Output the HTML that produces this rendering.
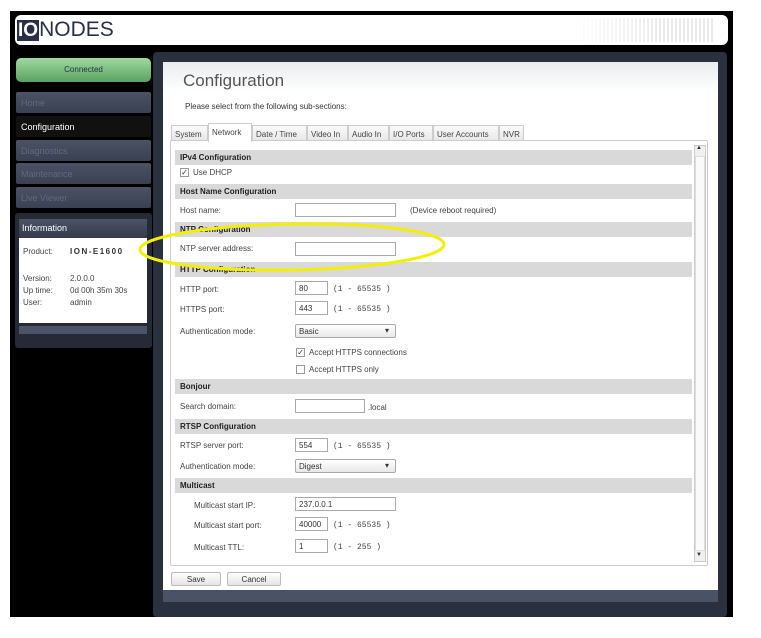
<!DOCTYPE html>
<html><head><meta charset="utf-8"><style>
*{margin:0;padding:0;box-sizing:border-box}
body{width:761px;height:638px;background:#fff;position:relative;overflow:hidden;font-family:"Liberation Sans",sans-serif;font-size:8px;color:#333}
.a{position:absolute}
.menu{position:absolute;left:16px;width:135px;height:21px;background:linear-gradient(#4a5264,#3a4152);color:#5f6a80;font-size:9px;padding:6px 0 0 5px;border-radius:2px}
.sec{position:absolute;left:175px;width:517px;height:15px;background:#d9d9d9;font-weight:bold;font-size:8px;color:#222;padding:3px 0 0 5px}
.lbl{position:absolute;font-size:8px;color:#444}
.inp{position:absolute;left:295px;height:14px;border:1px solid #aaa;background:#fff;font-size:8px;padding:2px 3px;color:#333}
.rng{position:absolute;font-size:8px;color:#444;font-family:"Liberation Mono",monospace}
.sel{position:absolute;left:295px;width:101px;height:14px;border:1px solid #aaa;border-radius:2px;background:linear-gradient(#fff,#e8e8e8);font-size:8px;padding:2px 3px}
.sel:after{content:"▾";position:absolute;right:6px;top:1px;font-size:8px}
.cb{position:absolute;width:9px;height:9px;border:1px solid #999;background:#fff;font-size:8px;line-height:7px;text-align:center}
.tab{position:absolute;top:125px;height:16px;border:1px solid #ccc;background:linear-gradient(#fafafa,#e8e8e8);font-size:8px;padding:4px 3px 0;color:#444}
.btn{position:absolute;top:572px;height:14px;border:1px solid #bbb;border-radius:2px;background:linear-gradient(#fff,#e4e4e4);font-size:8px;text-align:center;padding-top:2px}
</style></head><body>
<div class="a" style="left:10px;top:11px;width:723px;height:606px;background:#000"></div>
<div class="a" style="left:15px;top:15px;width:713px;height:30px;background:#fff;border-radius:6px"></div>
<div class="a" style="left:17px;top:20px;height:20px;font-size:21px;color:#2b2f45;line-height:20px"><span style="background:#2b2f45;color:#fff;font-weight:bold;padding:0 1px;font-size:19px">IO</span>NODES</div>
<div class="a" style="left:575px;top:18px;width:140px;height:24px;background:repeating-linear-gradient(90deg,#ddd 0 2px,#fff 2px 4px),#fff;opacity:.6;-webkit-mask:linear-gradient(90deg,transparent,#000 60%)"></div>
<div class="a" style="left:16px;top:58px;width:135px;height:24px;border-radius:5px;background:linear-gradient(#9fd9a0,#5aa35e);color:#234;font-size:8px;text-align:center;padding-top:7px">Connected</div>
<div class="menu" style="top:92px">Home</div>
<div class="menu" style="top:116px;background:#111;color:#fff">Configuration</div>
<div class="menu" style="top:140px">Diagnostics</div>
<div class="menu" style="top:163px">Maintenance</div>
<div class="menu" style="top:187px">Live Viewer</div>
<div class="a" style="left:15px;top:213px;width:137px;height:135px;background:#262a36;border-radius:3px"></div>
<div class="a" style="left:19px;top:219px;width:128px;height:19px;background:linear-gradient(#4b5366,#353b4b);color:#fff;font-size:9px;padding:4px 0 0 3px">Information</div>
<div class="a" style="left:19px;top:238px;width:128px;height:85px;background:#fff"></div>
<div class="lbl" style="left:23px;top:247px">Product:</div><div class="lbl" style="left:70px;top:247px;font-weight:bold;letter-spacing:1.5px;color:#333">ION-E1600</div>
<div class="lbl" style="left:23px;top:274px">Version:</div><div class="lbl" style="left:70px;top:274px">2.0.0.0</div>
<div class="lbl" style="left:23px;top:286px">Up time:</div><div class="lbl" style="left:70px;top:286px">0d 00h 35m 30s</div>
<div class="lbl" style="left:23px;top:298px">User:</div><div class="lbl" style="left:70px;top:298px">admin</div>
<div class="a" style="left:19px;top:326px;width:128px;height:8px;background:#4b5366"></div>
<div class="a" style="left:153px;top:52px;width:574px;height:565px;background:#2b303e;border-radius:4px"></div>
<div class="a" style="left:163px;top:62px;width:555px;height:528px;background:linear-gradient(#eaecee,#fff 30px)"></div>
<div class="a" style="left:163px;top:590px;width:555px;height:12px;background:#4a5266"></div>
<div class="a" style="left:183px;top:71px;font-size:17px;color:#555">Configuration</div>
<div class="lbl" style="left:185px;top:102px;color:#333">Please select from the following sub-sections:</div>
<div class="a" style="left:170px;top:140px;width:538px;height:426px;border:1px solid #ccc;background:#fff;border-radius:2px"></div>
<div class="tab" style="left:171px;width:37px">System</div>
<div class="tab" style="left:208px;width:44px;top:123px;height:19px;background:#fff;border-bottom:none">Network</div>
<div class="tab" style="left:252px;width:55px">Date / Time</div>
<div class="tab" style="left:307px;width:41px">Video In</div>
<div class="tab" style="left:348px;width:41px">Audio In</div>
<div class="tab" style="left:389px;width:44px">I/O Ports</div>
<div class="tab" style="left:433px;width:66px">User Accounts</div>
<div class="tab" style="left:499px;width:25px">NVR</div>
<div class="a" style="left:694px;top:145px;width:12px;height:417px;background:#f0f0f0;border:1px solid #ccc"></div>
<div class="a" style="left:695px;top:156px;width:10px;height:395px;background:#fafafa;border:1px solid #ddd"></div>
<div class="a" style="left:696px;top:145px;font-size:6px">▲</div><div class="a" style="left:696px;top:552px;font-size:6px">▼</div>

<div class="sec" style="top:150px">IPv4 Configuration</div>
<div class="cb" style="left:180px;top:168px">✓</div><div class="lbl" style="left:193px;top:168px">Use DHCP</div>
<div class="sec" style="top:184px">Host Name Configuration</div>
<div class="lbl" style="left:180px;top:206px">Host name:</div><div class="inp" style="top:203px;width:101px"></div><div class="lbl" style="left:410px;top:206px">(Device reboot required)</div>
<div class="sec" style="top:222px">NTP Configuration</div>
<div class="lbl" style="left:180px;top:244px">NTP server address:</div><div class="inp" style="top:242px;width:101px"></div>
<div class="sec" style="top:262px">HTTP Configuration</div>
<div class="lbl" style="left:180px;top:285px">HTTP port:</div><div class="inp" style="top:281px;width:33px">80</div><div class="rng" style="left:333px;top:285px">(1 - 65535 )</div>
<div class="lbl" style="left:180px;top:305px">HTTPS port:</div><div class="inp" style="top:301px;width:33px">443</div><div class="rng" style="left:333px;top:305px">(1 - 65535 )</div>
<div class="lbl" style="left:180px;top:327px">Authentication mode:</div><div class="sel" style="top:324px">Basic</div>
<div class="cb" style="left:296px;top:348px">✓</div><div class="lbl" style="left:309px;top:348px">Accept HTTPS connections</div>
<div class="cb" style="left:296px;top:365px"></div><div class="lbl" style="left:309px;top:365px">Accept HTTPS only</div>
<div class="sec" style="top:379px">Bonjour</div>
<div class="lbl" style="left:180px;top:402px">Search domain:</div><div class="inp" style="top:399px;width:70px"></div><div class="lbl" style="left:368px;top:403px">.local</div>
<div class="sec" style="top:419px">RTSP Configuration</div>
<div class="lbl" style="left:180px;top:441px">RTSP server port:</div><div class="inp" style="top:438px;width:33px">554</div><div class="rng" style="left:333px;top:442px">(1 - 65535 )</div>
<div class="lbl" style="left:180px;top:462px">Authentication mode:</div><div class="sel" style="top:459px">Digest</div>
<div class="sec" style="top:478px">Multicast</div>
<div class="lbl" style="left:194px;top:501px">Multicast start IP:</div><div class="inp" style="top:497px;width:101px">237.0.0.1</div>
<div class="lbl" style="left:194px;top:521px">Multicast start port:</div><div class="inp" style="top:517px;width:33px">40000</div><div class="rng" style="left:333px;top:521px">(1 - 65535 )</div>
<div class="lbl" style="left:194px;top:543px">Multicast TTL:</div><div class="inp" style="top:539px;width:33px">1</div><div class="rng" style="left:333px;top:543px">(1 - 255 )</div>
<div class="btn" style="left:171px;width:50px">Save</div>
<div class="btn" style="left:227px;width:54px">Cancel</div>
<svg class="a" style="left:0;top:0" width="761" height="638"><ellipse cx="292" cy="247" rx="152" ry="23" transform="rotate(-1 292 247)" fill="none" stroke="#f2f000" stroke-width="3"/></svg>
</body></html>
